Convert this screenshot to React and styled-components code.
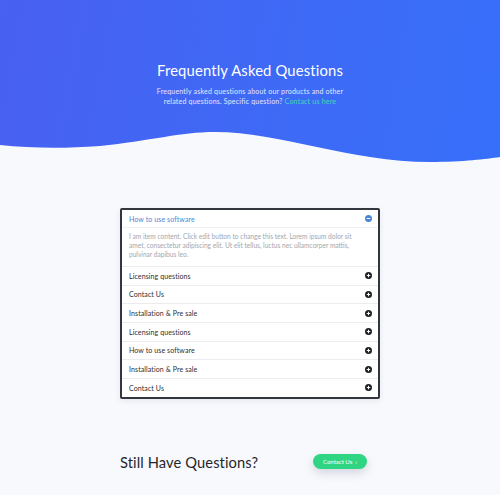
import React from "react";
import styled, { createGlobalStyle } from "styled-components";

const GlobalStyle = createGlobalStyle`
  html, body {
    margin: 0;
    padding: 0;
    background: #f8f9fd;
    font-family: "Lato", "Noto Sans", sans-serif;
  }
`;

const Page = styled.div`
  width: 500px;
  min-height: 495px;
  background: #f8f9fd;
  overflow: hidden;
`;

const Hero = styled.header`
  background: linear-gradient(100deg, #4960f2 0%, #3d6af6 60%, #376ffa 100%);
  display: flex;
  flex-direction: column;
  align-items: center;
`;

const HeroText = styled.div`
  padding-top: 60px;
  height: 68px;
  text-align: center;
  color: #fff;
`;

const Title = styled.h1`
  margin: 0;
  font-size: 14.8px;
  font-weight: 400;
  line-height: 20px;
  letter-spacing: 0.15px;
`;

const Subtitle = styled.p`
  margin: 7px auto 0;
  font-size: 7px;
  line-height: 9.5px;
  letter-spacing: 0.2px;
  color: #e4e8ff;
  width: 200px;
`;

const Link = styled.a`
  color: #40d6c0;
  text-decoration: none;
`;

const Wave = styled.svg`
  display: block;
  width: 500px;
  height: 36px;
`;

const Main = styled.main`
  display: flex;
  flex-direction: column;
  align-items: center;
  padding-top: 44px;
`;

const Card = styled.div`
  width: 256px;
  border: 2px solid #33363d;
  border-radius: 2px;
  background: #fff;
  box-shadow: 0 2px 6px rgba(30, 40, 80, 0.08);
`;

const Row = styled.div`
  display: flex;
  align-items: center;
  justify-content: space-between;
  height: ${(p) => (p.first ? "17px" : "18.67px")};
  padding: 0 6px 0 7px;
  border-top: ${(p) => (p.first ? "none" : "1px solid #ececef")};
  box-sizing: border-box;
  font-size: 7px;
  letter-spacing: 0.1px;
  color: ${(p) => (p.open ? "#4a86d6" : "#2c2d31")};
`;

const Body = styled.p`
  margin: 0;
  padding: 4px 14px 7px 7px;
  border-top: 1px solid #f0f0f3;
  font-size: 6.6px;
  line-height: 9px;
  color: #a3a6ad;
`;

const Bottom = styled.section`
  width: 260px;
  display: flex;
  align-items: center;
  justify-content: space-between;
  margin-top: 54px;
  padding-right: 13px;
  box-sizing: border-box;
`;

const Heading = styled.h2`
  margin: 0;
  font-size: 14.7px;
  font-weight: 400;
  letter-spacing: 0.1px;
  color: #26272b;
`;

const Button = styled.button`
  border: none;
  border-radius: 20px;
  background: #2fd582;
  color: #fff;
  font-family: inherit;
  font-size: 6px;
  height: 15px;
  padding: 0 10px;
  box-shadow: 0 4px 10px rgba(40, 60, 90, 0.18);
`;

function Toggle({ open }) {
  return (
    <svg width="7" height="7" viewBox="0 0 10 10">
      <circle cx="5" cy="5" r="5" fill={open ? "#4a86d6" : "#1f2024"} />
      <rect x="2.5" y="4.3" width="5" height="1.4" fill="#fff" />
      {!open && <rect x="4.3" y="2.5" width="1.4" height="5" fill="#fff" />}
    </svg>
  );
}

const items = [
  "Licensing questions",
  "Contact Us",
  "Installation & Pre sale",
  "Licensing questions",
  "How to use software",
  "Installation & Pre sale",
  "Contact Us",
];

export default function App() {
  return (
    <Page>
      <GlobalStyle />
      <Hero>
        <HeroText>
          <Title>Frequently Asked Questions</Title>
          <Subtitle>
            Frequently asked questions about our products and other
            <br />
            related questions. Specific question?{" "}
            <Link href="#">Contact us here</Link>
          </Subtitle>
        </HeroText>
        <Wave viewBox="0 0 500 36" preserveAspectRatio="none">
          <path
            d="M0,17 C30,20 60,21 100,18 C150,13 180,4 215,4 C280,4 350,34 430,34 C465,34 485,31 500,29 L500,37 L0,37 Z"
            fill="#f8f9fd"
          />
        </Wave>
      </Hero>
      <Main>
        <Card>
          <Row first open>
            How to use software
            <Toggle open />
          </Row>
          <Body>
            I am item content. Click edit button to change this text. Lorem
            ipsum dolor sit amet, consectetur adipiscing elit. Ut elit tellus,
            luctus nec ullamcorper mattis, pulvinar dapibus leo.
          </Body>
          {items.map((t, i) => (
            <Row key={i}>
              {t}
              <Toggle />
            </Row>
          ))}
        </Card>
        <Bottom>
          <Heading>Still Have Questions?</Heading>
          <Button>Contact Us &nbsp;›</Button>
        </Bottom>
      </Main>
    </Page>
  );
}
